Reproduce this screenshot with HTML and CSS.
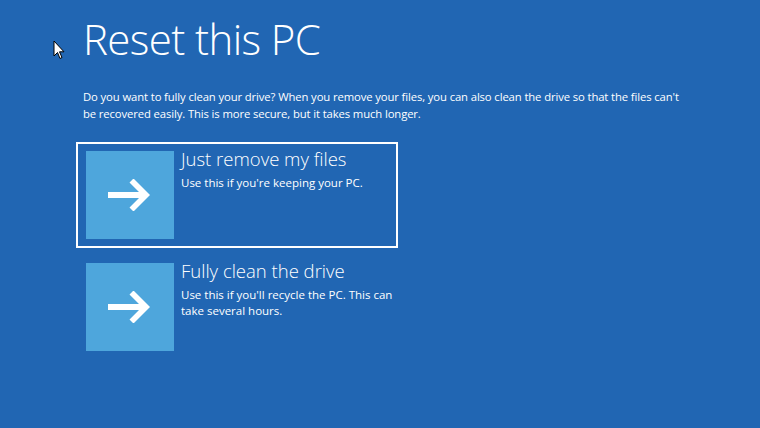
FILE: index.html
```html
<!DOCTYPE html>
<html>
<head>
	<title>Reset this PC</title>
	<meta charset="utf-8">
	<link rel="stylesheet" href="styles.css">
</head>
<body>
	<svg class="cursor" width="13" height="21" viewBox="0 0 13 21">
		<path d="M1 1 L1 16 L4.5 12.5 L7 18.5 L9 17.5 L6.5 11.8 L11 11.8 Z" fill="#fff" stroke="#000" stroke-width="1"/>
	</svg>
	<main class="page">
		<h1 class="title">Reset this PC</h1>
		<p class="intro">Do you want to fully clean your drive? When you remove your files, you can also clean the drive so that the files can't be recovered easily. This is more secure, but it takes much longer.</p>
		<div class="options">
			<div class="option selected">
				<div class="tile">
					<svg width="44" height="32" viewBox="0 0 44 32"><path d="M0 13 H31 L21.5 3.5 L25.5 -0.5 L42 16 L25.5 32.5 L21.5 28.5 L31 19 H0 Z" fill="#fff"/></svg>
				</div>
				<div class="text">
					<h2>Just remove my files</h2>
					<p>Use this if you're keeping your PC.</p>
				</div>
			</div>
			<div class="option">
				<div class="tile">
					<svg width="44" height="32" viewBox="0 0 44 32"><path d="M0 13 H31 L21.5 3.5 L25.5 -0.5 L42 16 L25.5 32.5 L21.5 28.5 L31 19 H0 Z" fill="#fff"/></svg>
				</div>
				<div class="text">
					<h2>Fully clean the drive</h2>
					<p>Use this if you'll recycle the PC. This can take several hours.</p>
				</div>
			</div>
		</div>
	</main>
</body>
</html>
```
FILE: styles.css
```css
:root{
	--bg-blue: #2166b3;
	--tile-blue: #4ea6dc;
}
*{
	margin: 0;
	padding: 0;
}
body{
	background: var(--bg-blue);
	color: white;
	font-family: 'Open Sans', 'Noto Sans', sans-serif;
	width: 760px;
	height: 428px;
	overflow: hidden;
}
.cursor{
	position: absolute;
	left: 53px;
	top: 40px;
}
.page{
	padding: 12px 0 0 83px;
}
.title{
	font-weight: 300;
	font-size: 42px;
	line-height: 54px;
	letter-spacing: -0.6px;
}
.intro{
	margin-top: 22px;
	font-size: 11.3px;
	line-height: 17px;
	letter-spacing: -0.12px;
	width: 604px;
}
.options{
	margin: 20px 0 0 -7px;
	display: flex;
	flex-direction: column;
	gap: 6px;
}
.option{
	width: 302px;
	display: flex;
	gap: 7px;
	padding: 7px 8px;
	border: 2px solid transparent;
}
.option.selected{
	border-color: white;
}
.tile{
	width: 88px;
	height: 88px;
	flex: none;
	background: var(--tile-blue);
	display: flex;
	align-items: center;
	justify-content: center;
}
.text{
	margin-top: -2px;
}
.text h2{
	font-weight: 300;
	font-size: 18.5px;
	line-height: 20px;
}
.text p{
	margin-top: 6px;
	font-size: 11.5px;
	line-height: 16px;
	width: 220px;
}
```
